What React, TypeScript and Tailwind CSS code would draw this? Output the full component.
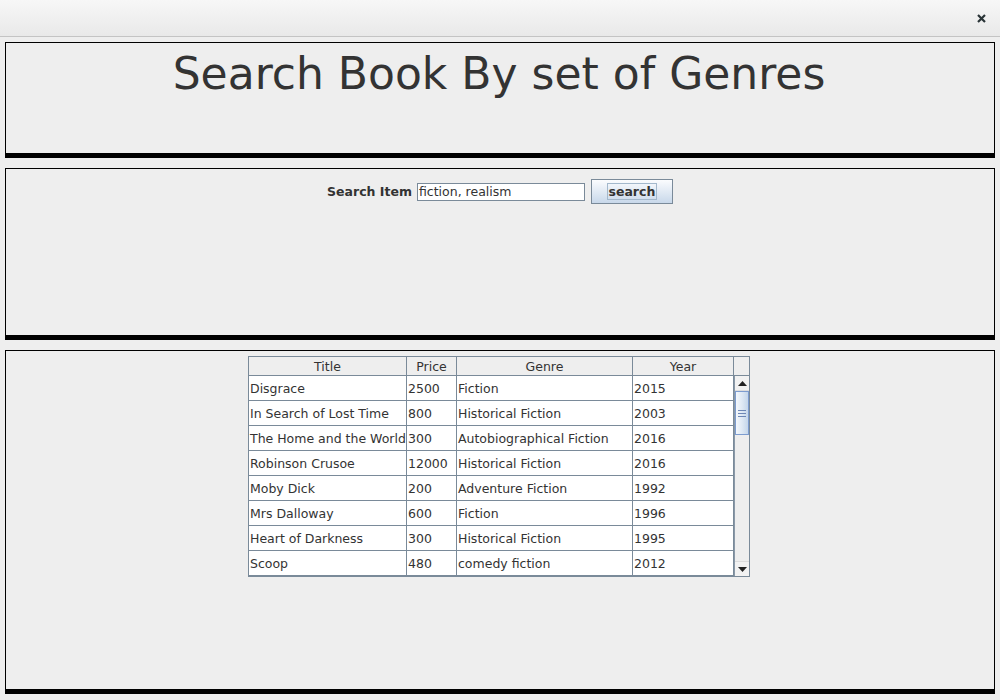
import React from 'react';

type Book = { title: string; price: string; genre: string; year: string };

const books: Book[] = [
  { title: 'Disgrace', price: '2500', genre: 'Fiction', year: '2015' },
  { title: 'In Search of Lost Time', price: '800', genre: 'Historical Fiction', year: '2003' },
  { title: 'The Home and the World', price: '300', genre: 'Autobiographical Fiction', year: '2016' },
  { title: 'Robinson Crusoe', price: '12000', genre: 'Historical Fiction', year: '2016' },
  { title: 'Moby Dick', price: '200', genre: 'Adventure Fiction', year: '1992' },
  { title: 'Mrs Dalloway', price: '600', genre: 'Fiction', year: '1996' },
  { title: 'Heart of Darkness', price: '300', genre: 'Historical Fiction', year: '1995' },
  { title: 'Scoop', price: '480', genre: 'comedy fiction', year: '2012' },
];

const font = "font-['DejaVu_Sans',sans-serif]";

const Arrow = ({ up }: { up?: boolean }) => (
  <svg width="9" height="5" viewBox="0 0 9 5">
    {up ? <path d="M0 5 L4.5 0 L9 5 Z" fill="#222" /> : <path d="M0 0 L4.5 5 L9 0 Z" fill="#222" />}
  </svg>
);

const ScrollBar = () => (
  <div className="w-[15px] flex flex-col bg-[#eeeeee] border-l border-[#8a99a8]">
    <div className="h-[15px] flex items-center justify-center bg-[#f2f2f2] border-b border-[#dcdcdc]">
      <Arrow up />
    </div>
    <div className="h-[44px] bg-gradient-to-r from-[#f4f8fc] via-[#dfe9f4] to-[#c4d6ea] border border-[#7d9ccf] flex flex-col items-center justify-center gap-[2px]">
      <div className="w-[8px] h-px bg-[#6d87b5]" />
      <div className="w-[8px] h-px bg-[#6d87b5]" />
      <div className="w-[8px] h-px bg-[#6d87b5]" />
    </div>
    <div className="flex-1" />
    <div className="h-[15px] flex items-center justify-center bg-[#f2f2f2] border-t border-[#dcdcdc]">
      <Arrow />
    </div>
  </div>
);

export default function App() {
  const cols = ['w-[158px]', 'w-[50px]', 'w-[176px]', 'w-[101px]'];
  return (
    <div className={`w-[1000px] h-[700px] bg-[#eeeeee] flex flex-col text-[#333333] ${font}`}>
      {/* window title bar */}
      <div className="h-[37px] bg-gradient-to-b from-[#f7f7f7] to-[#e9e9e9] border-b border-[#c4c4c4] flex items-center justify-end pr-[14px]">
        <svg width="9" height="9" viewBox="0 0 9 9">
          <path d="M1 1 L8 8 M8 1 L1 8" stroke="#2a3437" strokeWidth="2.2" />
        </svg>
      </div>

      <div className="flex flex-col gap-[10px] pt-[5px] px-[5px]">
        {/* heading panel */}
        <div className="h-[116px] border border-black border-b-[5px] flex justify-center pt-[9px]">
          <h1 className="text-[44px] leading-none font-normal mr-[2px]">Search Book By set of Genres</h1>
        </div>

        {/* search panel */}
        <div className="h-[172px] border border-black border-b-[5px] flex justify-center items-start pt-[10px]">
          <div className="flex items-center gap-[5px] text-[12.5px]">
            <span className="font-bold pt-[1px]">Search Item</span>
            <div className="w-[168px] h-[18px] bg-white border border-[#7a8a99] flex items-center pl-[1px] pt-[1px]">
              fiction, realism
            </div>
            <button className="ml-[1px] w-[82px] h-[25px] border border-[#7a8a99] bg-gradient-to-b from-[#fbfcfe] to-[#c8d8ea] flex items-center justify-center">
              <span className="font-bold leading-[14px] px-[1px] pt-[1px] border border-[#a3b8cc]">search</span>
            </button>
          </div>
        </div>

        {/* result panel */}
        <div className="h-[344px] border border-black border-b-[5px] flex justify-center items-start pt-[5px]">
          <div className="ml-[-2px] border border-[#7a8a99] flex flex-col bg-[#eeeeee] text-[12.5px]">
            <div className="flex h-[19px] border-b border-[#7a8a99]">
              {['Title', 'Price', 'Genre', 'Year'].map((h, i) => (
                <div key={h} className={`${cols[i]} border-r border-[#7a8a99] flex items-center justify-center leading-none pt-[2px]`}>
                  {h}
                </div>
              ))}
              <div className="w-[15px]" />
            </div>
            <div className="flex">
              <div className="flex flex-col bg-white">
                {books.map((b) => (
                  <div key={b.title} className="flex h-[25px] border-b border-[#7a8a99]">
                    {[b.title, b.price, b.genre, b.year].map((v, i) => (
                      <div
                        key={i}
                        className={`${cols[i]} border-r border-[#7a8a99] flex items-center pl-[1px] pt-[2px] leading-none whitespace-nowrap overflow-hidden`}
                      >
                        {v}
                      </div>
                    ))}
                  </div>
                ))}
              </div>
              <ScrollBar />
            </div>
          </div>
        </div>
      </div>
    </div>
  );
}
